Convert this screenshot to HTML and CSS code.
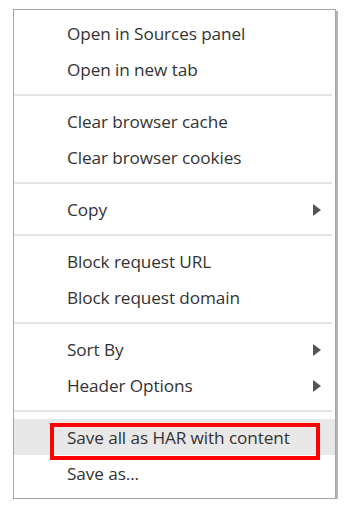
FILE: index.html
```html
<!DOCTYPE html>
<html>
<head>
<meta charset="utf-8">
<link rel="stylesheet" href="styles.css">
</head>
<body>
<div class="menu">
  <div class="item">Open in Sources panel</div>
  <div class="item">Open in new tab</div>
  <div class="sep"></div>
  <div class="item">Clear browser cache</div>
  <div class="item">Clear browser cookies</div>
  <div class="sep"></div>
  <div class="item sub">Copy<svg class="arrow" width="8" height="12" viewBox="0 0 8 12"><polygon points="0,0 8,6 0,12" fill="#555"/></svg></div>
  <div class="sep"></div>
  <div class="item">Block request URL</div>
  <div class="item">Block request domain</div>
  <div class="sep"></div>
  <div class="item sub">Sort By<svg class="arrow" width="8" height="12" viewBox="0 0 8 12"><polygon points="0,0 8,6 0,12" fill="#555"/></svg></div>
  <div class="item sub">Header Options<svg class="arrow" width="8" height="12" viewBox="0 0 8 12"><polygon points="0,0 8,6 0,12" fill="#555"/></svg></div>
  <div class="sep"></div>
  <div class="item hl">Save all as HAR with content<span class="mark"></span></div>
  <div class="item">Save as...</div>
</div>
</body>
</html>
```

FILE: styles.css
```css
html, body {
  margin: 0;
  padding: 0;
  background: #fff;
}
body {
  padding: 9px 0 0 13px;
  font-family: "Open Sans", "Noto Sans", sans-serif;
}
.menu {
  width: 321px;
  border: 1px solid #a6a6a6;
  box-shadow: 2px 2px 0 #b4b4b4;
  padding: 5px 0 7px 0;
  background: #fff;
}
.item {
  position: relative;
  height: 36px;
  display: flex;
  align-items: center;
  justify-content: space-between;
  padding: 1px 14px 0 53px;
  box-sizing: border-box;
  font-size: 17.2px;
  color: #333;
  letter-spacing: -0.1px;
}
.arrow {
  display: block;
}
.sep {
  height: 2px;
  margin: 7px 3px 7px 0;
  background: #e6e6e8;
}
.hl {
  background: #e8e8e8;
}
.mark {
  position: absolute;
  left: 36px;
  top: 4px;
  width: 262px;
  height: 29px;
  border: 4px solid #ff0000;
}
```
